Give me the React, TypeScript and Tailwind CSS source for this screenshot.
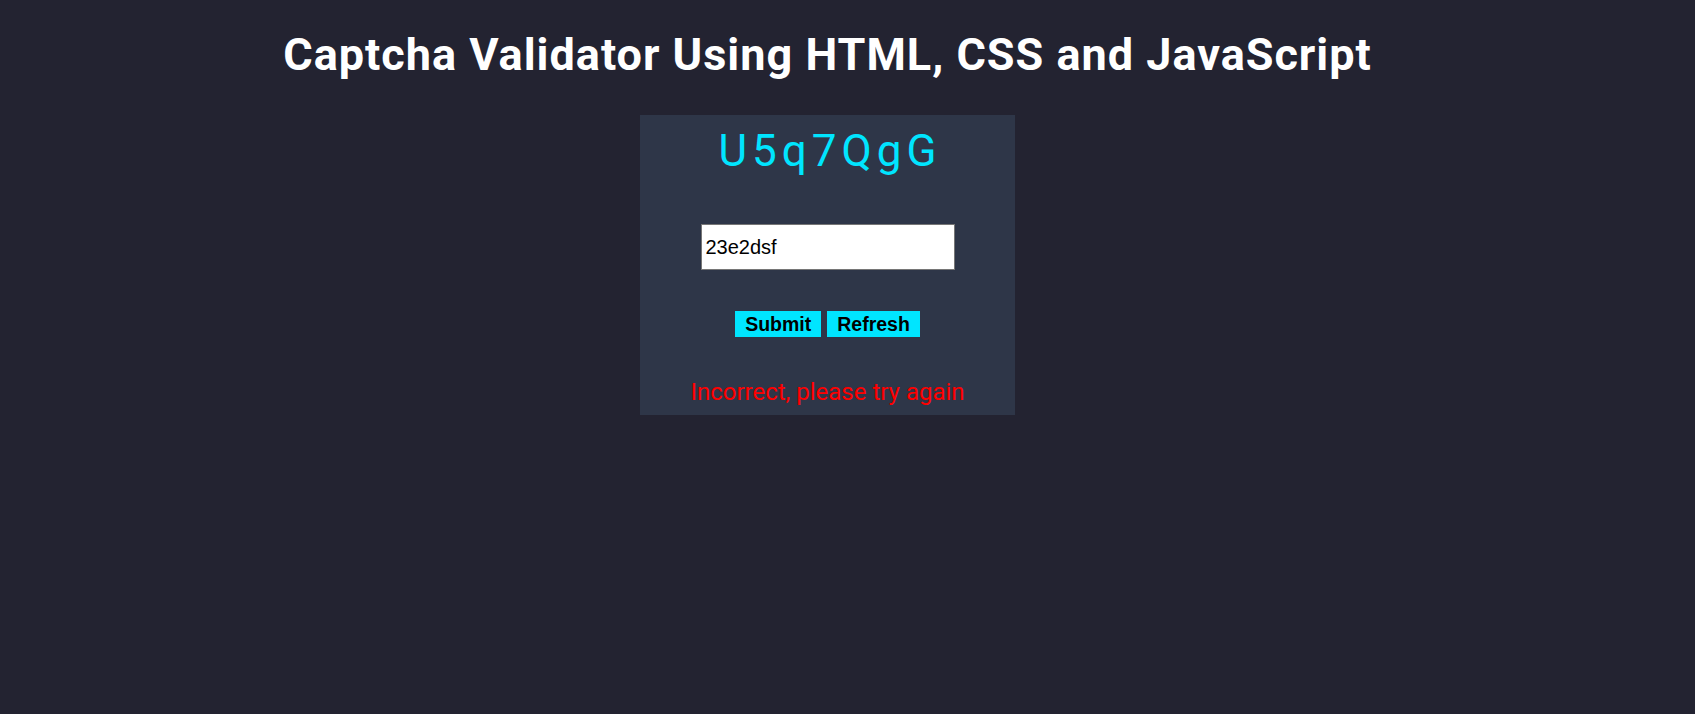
import React, { useState } from "react";

const App = () => {
  const [value, setValue] = useState("23e2dsf");

  return (
    <div className="min-h-[714px] w-full bg-[#232331] font-['Roboto',sans-serif]">
      <div className="flex w-[1655px] flex-col items-center">
        <h1 className="mt-[28px] text-[45px] font-bold leading-[54px] tracking-[1px] text-white">
          Captcha Validator Using HTML, CSS and JavaScript
        </h1>
        <div className="mt-[33px] flex h-[300px] w-[375px] flex-col items-center bg-[#2e3648]">
          <div className="mt-[11px] pl-[5px] text-[44px] leading-[50px] tracking-[5px] text-[#00e5ff]">
            U5q7QgG
          </div>
          <input
            value={value}
            onChange={(e) => setValue(e.target.value)}
            className="mt-[48px] h-[46px] w-[254px] border border-[#767676] bg-white px-[4px] font-['Liberation_Sans',Arial,sans-serif] text-[20px] text-black outline-none"
          />
          <div className="mt-[41px] flex gap-[6px]">
            <button className="h-[26px] bg-[#00e5ff] px-[10px] font-['Liberation_Sans',Arial,sans-serif] text-[19.5px] font-bold leading-[26px] text-black">
              Submit
            </button>
            <button className="h-[26px] bg-[#00e5ff] px-[10px] font-['Liberation_Sans',Arial,sans-serif] text-[19.5px] font-bold leading-[26px] text-black">
              Refresh
            </button>
          </div>
          <p className="mt-[41px] text-[24px] leading-[28px] text-[#ff0000]">
            Incorrect, please try again
          </p>
        </div>
      </div>
    </div>
  );
};

export default App;
